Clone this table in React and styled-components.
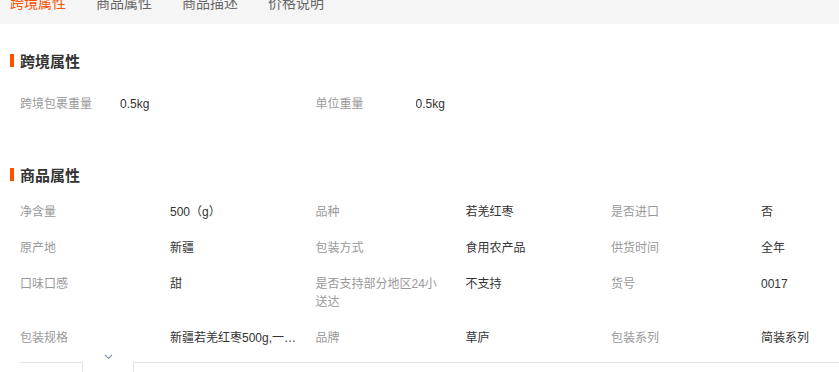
import React from "react";
import styled, { createGlobalStyle } from "styled-components";

const GlobalStyle = createGlobalStyle`
  html, body { margin: 0; padding: 0; background: #fff; overflow: hidden; }
  body {
    font-family: "Liberation Sans", "Noto Sans CJK SC", sans-serif;
    color: #333;
  }
`;

const Page = styled.div`
  width: 906px;
`;

const TabBar = styled.div`
  height: 24px;
  background: #f5f5f5;
  display: flex;
  gap: 30px;
  padding-left: 10px;
  overflow: hidden;
`;

const Tab = styled.div`
  font-size: 14px;
  line-height: 14px;
  margin-top: -4px;
  color: ${(p) => (p.$active ? "#ff5000" : "#666")};
`;

const Section = styled.section`
  margin-top: ${(p) => p.$top}px;
`;

const Title = styled.h3`
  margin: 0;
  display: flex;
  align-items: center;
  height: 22px;
  padding-left: 10px;
  font-size: 15px;
  font-weight: bold;
  color: #333;
  &::before {
    content: "";
    width: 4px;
    height: 13px;
    background: #ff5000;
    margin-right: 6px;
  }
`;

const Grid = styled.div`
  display: grid;
  grid-template-columns: repeat(${(p) => p.$cols}, 295.5px);
  padding-left: 20px;
  margin-top: ${(p) => p.$gap}px;
  align-items: start;
`;

const Item = styled.div`
  display: flex;
  padding: 9px 0;
  font-size: 12px;
  line-height: 18px;
`;

const Label = styled.div`
  width: ${(p) => p.$w}px;
  flex: none;
  box-sizing: border-box;
  padding-right: 20px;
  color: #999;
`;

const Value = styled.div`
  max-width: 127px;
  color: #333;
  white-space: nowrap;
  overflow: hidden;
  text-overflow: ellipsis;
`;

const Footer = styled.div`
  display: flex;
  padding-left: 20px;
  margin-top: 6px;
  height: 12px;
`;

const FooterBox = styled.div`
  border-top: 1px solid #e5e5e5;
  ${(p) => (p.$side === "right" ? "border-right: 1px solid #e5e5e5;" : "border-left: 1px solid #e5e5e5;")}
  width: ${(p) => (p.$w ? `${p.$w}px` : "auto")};
  flex: ${(p) => (p.$w ? "none" : "1")};
`;

const Toggle = styled.div`
  width: 50px;
  display: flex;
  justify-content: center;
  margin-top: -8px;
  height: 6px;
`;

const crossBorder = [
  ["跨境包裹重量", "0.5kg"],
  ["单位重量", "0.5kg"],
];

const attrs = [
  ["净含量", "500（g）"],
  ["品种", "若羌红枣"],
  ["是否进口", "否"],
  ["原产地", "新疆"],
  ["包装方式", "食用农产品"],
  ["供货时间", "全年"],
  ["口味口感", "甜"],
  ["是否支持部分地区24小送达", "不支持"],
  ["货号", "0017"],
  ["包装规格", "新疆若羌红枣500g,一袋装"],
  ["品牌", "草庐"],
  ["包装系列", "简装系列"],
];

export default function App() {
  return (
    <Page>
      <GlobalStyle />
      <TabBar>
        <Tab $active>跨境属性</Tab>
        <Tab>商品属性</Tab>
        <Tab>商品描述</Tab>
        <Tab>价格说明</Tab>
      </TabBar>

      <Section $top={25}>
        <Title>跨境属性</Title>
        <Grid $cols={2} $gap={15}>
          {crossBorder.map(([k, v]) => (
            <Item key={k}>
              <Label $w={100}>{k}</Label>
              <Value>{v}</Value>
            </Item>
          ))}
        </Grid>
      </Section>

      <Section $top={41}>
        <Title>商品属性</Title>
        <Grid $cols={3} $gap={9}>
          {attrs.map(([k, v]) => (
            <Item key={k}>
              <Label $w={150}>{k}</Label>
              <Value>{v}</Value>
            </Item>
          ))}
        </Grid>
      </Section>

      <Footer>
        <FooterBox $w={62} $side="right" />
        <Toggle>
          <svg width="9" height="6" viewBox="0 0 9 6">
            <polyline points="1,1 4.5,4.5 8,1" fill="none" stroke="#8a97a8" strokeWidth="1.2" />
          </svg>
        </Toggle>
        <FooterBox $side="left" />
      </Footer>
    </Page>
  );
}
